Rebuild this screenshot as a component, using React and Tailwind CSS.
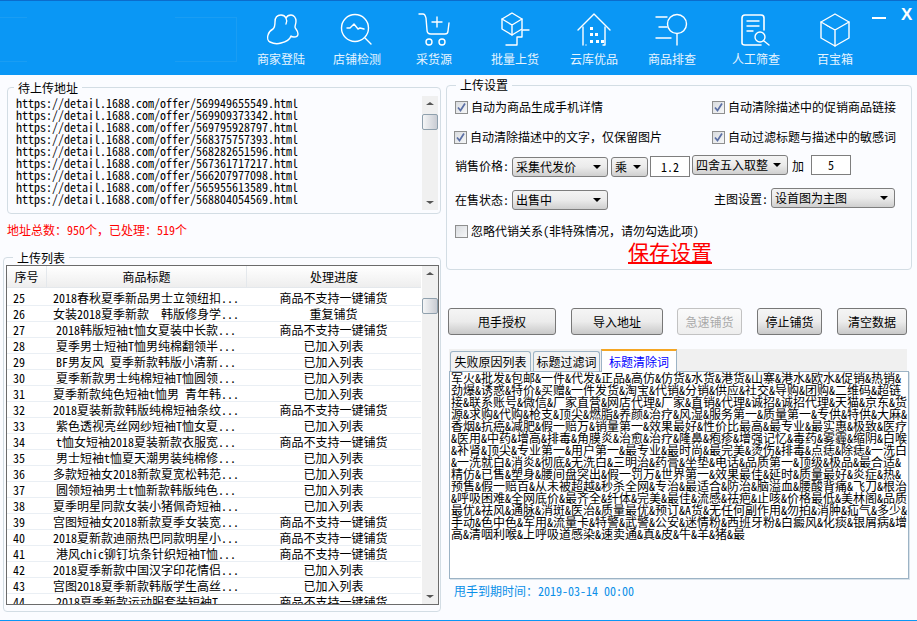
const rows = [
  [25, "2018春秋夏季新品男士立领纽扣...", 0],
  [26, "女装2018夏季新款  韩版修身学...", 2],
  [27, "2018韩版短袖t恤女夏装中长款...", 0],
  [28, "夏季男士短袖T恤男纯棉翻领半...", 1],
  [29, "BF男友风 夏季新款韩版小清新...", 1],
  [30, "夏季新款男士纯棉短袖T恤圆领...", 1],
  [31, "夏季新款纯色短袖t恤男 青年韩...", 1],
  [32, "2018夏装新款韩版纯棉短袖条纹...", 0],
  [33, "紫色透视亮丝网纱短袖T恤女夏...", 1],
  [34, "t恤女短袖2018夏装新款衣服宽...", 0],
  [35, "男士短袖t恤夏天潮男装纯棉修...", 1],
  [36, "多款短袖女2018新款夏宽松韩范...", 1],
  [37, "圆领短袖男士t恤新款韩版纯色...", 1],
  [38, "夏季明星同款女装小猪佩奇短袖...", 1],
  [39, "宫图短袖女2018新款夏季女装宽...", 0],
  [40, "2018夏新款迪丽热巴同款明星小...", 0],
  [41, "港风chic铆钉坑条针织短袖T恤...", 0],
  [42, "2018夏季新款中国汉字印花情侣...", 1],
  [43, "宫图2018夏季新款韩版学生高丝...", 1],
  [44, "2018夏季新款运动服套装短袖T...", 0],
];
const statuses = ["商品不支持一键铺货", "已加入列表", "重复铺货"];
const urls = ["569949655549", "569909373342", "569795928797", "568375757393", "568282651596", "567361717217", "566207977098", "565955613589", "568804054569"];
const words = [
  "军火&批发&包邮&一件&代发&正品&高仿&仿货&水货&港货&山寨&港水&欧水&促销&热销&",
  "劲爆&诱惑&特价&买赠&一件发货&淘宝&代销&分销&供应&社交&导购&团购&二维码&超链",
  "接&联系账号&微信&厂家直营&网店代理&厂家&直销&代理&诚招&诚招代理&天猫&京东&货",
  "源&求购&代购&枪支&顶尖&燃脂&养颜&治疗&风湿&服务第一&质量第一&专供&特供&大麻&",
  "香烟&抗癌&减肥&假一赔万&销量第一&效果最好&性价比最高&最专业&最实惠&极致&医疗",
  "&医用&中药&增高&排毒&角膜炎&治愈&治疗&隆鼻&疱疹&增强记忆&毒药&雾霾&缩阴&白喉",
  "&补肾&顶尖&专业第一&用户第一&最专业&最时尚&最完美&烫伤&排毒&点痣&除痣&一洗白",
  "&一洗就白&消炎&彻底&无洗白&三明治&药膏&坐垫&电话&品质第一&顶级&极品&最合适&",
  "精仿&已售&塑身&腰间盘突出&假一罚万&世界第一&效果最佳&延时&质量最好&炎症&热&",
  "预售&假一赔百&从未被超越&秒杀全网&专治&最适合&防治&脑溢血&腰酸背痛&飞刀&根治",
  "&呼吸困难&全网底价&最齐全&纤体&完美&最佳&流感&祛疤&止咳&价格最低&美林阁&品质",
  "最优&祛风&通脉&消斑&医治&质量最优&预订&A货&无任何副作用&勿拍&消肿&疝气&多少&",
  "手动&色中色&军用&流量卡&特警&武警&公安&迷情粉&西班牙粉&白癜风&化痰&银屑病&增",
  "高&清咽利喉&上呼吸道感染&速卖通&真&皮&牛&羊&猪&最",
].join("\n");

const Svg = ({ children }) => (
  <svg width="40" height="36" viewBox="0 0 40 36" fill="none" stroke="white" strokeWidth="1.4" strokeLinecap="round" strokeLinejoin="round">
    {children}
  </svg>
);
const icons = [
  <Svg key="a"><path d="M14 10c0-5 3-7 6-7 2 0 4 1 5 3 1-2 3-3 5-3 3 0 5 3 5 6 0 3-1 4-1 6 0 2 3 3 3 7 0 2-2 3-4 3-1 0-2 0-3-1-1 3-5 6-10 7-3 1-7 1-11-1-2-1-3-4-2-7 1-4 3-5 5-6 2-2 2-4 2-7z" /><path d="M25 6c1 2 1 4 0 6" /></Svg>,
  <Svg key="b"><circle cx="18" cy="16" r="13.5" /><path d="M28 26l6 6" /><path d="M10 16l3 0 4-4 4 5 2-1 4 1" /></Svg>,
  <Svg key="c"><path d="M5 2h4c2 0 2 1 3 4l1 12c0 3 2 4 4 4h14c2 0 3-1 3-3l1-8" /><path d="M23 5v10M18 10h10" /><circle cx="15" cy="30" r="3" /><circle cx="28" cy="30" r="3" /></Svg>,
  <Svg key="d"><path d="M17 1l10 6v10l-10 6-10-6V7z" /><path d="M7 7l10 6 10-6M17 13v10" /><path d="M11 33h11v-8h5v-7h7" /></Svg>,
  <Svg key="e"><path d="M4 18L20 2l16 16" /><path d="M9 15v18h0M31 15v18h-2" /><path d="M12 33h0" /><g fill="white" stroke="none"><rect x="16" y="15" width="3" height="3" /><rect x="16" y="21" width="3" height="3" /><rect x="21" y="21" width="3" height="3" /><rect x="16" y="28" width="3" height="3" /><rect x="22" y="28" width="3" height="3" /><rect x="27" y="28" width="3" height="3" /></g></Svg>,
  <Svg key="f"><path d="M4 5h11M7 15h8M4 26h15" /><circle cx="25" cy="12" r="9.5" /><path d="M25 22v11" /></Svg>,
  <Svg key="g"><path d="M28 18V6c0-2-1-3-3-3H9C7 3 6 4 6 6v25c0 1 1 2 3 2h16" strokeWidth="1.6" /><path d="M11 9h12M11 14h12M11 19h6" /><circle cx="24" cy="25" r="5" /><path d="M28 29l5 4" /></Svg>,
  <Svg key="h"><path d="M20 2l14 8v16l-14 8-14-8V10z" /><path d="M6 10l14 8 14-8M20 18v16" /><path d="M11 13l5 3" strokeWidth="1" /></Svg>,
];
const nav = ["商家登陆", "店铺检测", "采货源", "批量上货", "云库优品", "商品排查", "人工筛查", "百宝箱"];
const navX = ["w-[78px]", "w-[74px]", "w-[80px]", "w-[82px]", "w-[76px]", "w-[80px]", "w-[88px]", "w-[70px]"];

function Check({ on }) {
  return (
    <span className="flex w-[13px] h-[13px] shrink-0 items-center justify-center border border-[#8e8f8f] bg-gradient-to-br from-[#d9dce0] to-[#f6f7f8]">
      {on && (
        <svg width="11" height="11" viewBox="0 0 11 11" fill="none" stroke="#5b6fa5" strokeWidth="1.7">
          <path d="M2 5.5l2.5 3L9 1.5" />
        </svg>
      )}
    </span>
  );
}
function Select({ label, cls }) {
  return (
    <div className={`flex h-[20px] items-center justify-between rounded-[3px] border border-[#7e7e7e] bg-gradient-to-b from-[#f4f4f4] via-[#ebebeb] to-[#cfcfcf] pl-[3px] pr-[6px] ${cls}`}>
      <span>{label}</span>
      <span className="h-0 w-0 border-x-[4px] border-t-[4px] border-x-transparent border-t-black" />
    </div>
  );
}
function Btn({ children, cls, disabled }) {
  return (
    <button className={`flex h-[27px] items-center justify-center rounded-[3px] border bg-gradient-to-b ${disabled ? "border-[#c2c2c2] from-[#fafafa] to-[#eeeeee] text-[#a9a9a9]" : "border-[#777] from-[#f5f5f5] via-[#ececec] to-[#c9c9c9] text-black"} ${cls}`}>
      {children}
    </button>
  );
}
function Scroll({ top, cls }) {
  return (
    <div className={`flex w-[16px] shrink-0 flex-col items-center bg-[#f0f0f0] ${cls}`}>
      <span className="mb-auto mt-[6px] h-0 w-0 border-x-[4px] border-b-[3px] border-x-transparent border-b-[#555]" />
      <span className="mb-[6px] h-0 w-0 border-x-[4px] border-t-[3px] border-x-transparent border-t-[#555]" />
      <span className={`absolute left-0 h-[16px] w-[16px] rounded-[2px] border border-[#8fa0ad] bg-gradient-to-r from-[#f5f6f7] to-[#c9ccd3] ${top}`} />
    </div>
  );
}

export default function App() {
  return (
    <div className="flex h-[621px] w-[917px] flex-col overflow-hidden border-b border-[#0a97f5] bg-[#fbfcff] font-['Noto_Sans_Mono_CJK_SC','Noto_Sans_CJK_SC',sans-serif] text-[12px] leading-[12px] text-black">
      <header className="flex h-[75px] shrink-0 border-t border-[#0b6ccc] bg-[#0a97f5]">
        <div className="mt-[16px] h-[45px] w-[27px] shrink-0 border-y border-[#1a9df3]" />
        <div className="ml-[148px] mr-[5px] mt-[16px] h-[45px] w-[62px] shrink-0 border border-l-0 border-[#1a9df3]" />
        {nav.map((n, i) => (
          <div key={n} className={`flex flex-col items-center pt-[11px] text-white ${navX[i]}`}>
            {icons[i]}
            <span className="mt-[5px] text-[#e6f4ff]">{n}</span>
          </div>
        ))}
        <div className="ml-[2px] flex items-start">
          <span className="mt-[16px] h-[2px] w-[14px] bg-white" />
          <span className="ml-[15px] mt-[4px] font-['Liberation_Sans',sans-serif] text-[17px] font-bold leading-[20px] text-white">X</span>
        </div>
      </header>

      <main className="flex flex-1">
        <section className="w-[445px] shrink-0">
          <fieldset className="ml-[7px] mt-[4px] h-[135px] w-[434px] rounded-[4px] border border-[#d3dde4]">
            <legend className="ml-[6px] px-[4px] leading-[17px]">待上传地址</legend>
            <div className="relative flex h-[115px] pl-[8px]">
              <div className="flex-1 pt-[1px]">
                {urls.map((u) => (
                  <div key={u} className="h-[12px]">{`https://detail.1688.com/offer/${u}.html`}</div>
                ))}
              </div>
              <div className="relative mr-[2px] flex">
                <Scroll top="top-[18px]" cls="h-[114px]" />
              </div>
            </div>
          </fieldset>
          <p className="ml-[7px] mt-[10px] text-[#ff0000]">地址总数{"\uFF1A"}950个{"\uFF0C"}已处理{"\uFF1A"}519个</p>
          <fieldset className="ml-[3px] mt-[14px] h-[362px] w-[438px] rounded-[4px] border border-[#d3dde4]">
            <legend className="ml-[9px] px-[4px] leading-[15px]">上传列表</legend>
            <div className="relative ml-[2px] flex h-[340px] w-[433px] overflow-hidden border border-[#6b6b6b] bg-white">
              <div className="w-[414px]">
                <div className="flex h-[22px] items-center border-b border-[#e4e8ec] bg-gradient-to-b from-white to-[#eeeeee] text-center">
                  <span className="w-[40px] border-r border-[#e4e8ec] leading-[21px]">序号</span>
                  <span className="w-[200px] border-r border-[#e4e8ec] leading-[21px]">商品标题</span>
                  <span className="flex-1 leading-[21px]">处理进度</span>
                </div>
                <div className="pt-[2px]">
                  {rows.map(([n, t, s]) => (
                    <div key={n} className="flex h-[16px] items-center border-b border-[#eaeff4]">
                      <span className="w-[40px] pl-[6px]">{n}</span>
                      <span className="w-[198px] whitespace-pre text-center">{t}</span>
                      <span className="ml-[1px] w-[175px] text-center">{statuses[s]}</span>
                    </div>
                  ))}
                </div>
              </div>
              <div className="relative ml-[1px] flex">
                <Scroll top="top-[32px]" cls="h-[338px]" />
              </div>
            </div>
          </fieldset>
        </section>

        <section className="flex-1">
          <fieldset className="ml-[1px] mt-[2px] h-[193px] w-[466px] rounded-[4px] border border-[#d3dde4] pl-[8px]">
            <legend className="ml-[1px] px-[4px] leading-[16px]">上传设置</legend>
            <div className="mt-[7px] flex h-[14px] items-center">
              <label className="flex w-[257px] items-center gap-[3px]"><Check on />自动为商品生成手机详情</label>
              <label className="flex items-center gap-[3px]"><Check on />自动清除描述中的促销商品链接</label>
            </div>
            <div className="mt-[16px] flex h-[14px] items-center">
              <label className="ml-[-1px] flex w-[258px] items-center gap-[3px]"><Check on /><span>自动清除描述中的文字{"\uFF0C"}仅保留图片</span></label>
              <label className="flex items-center gap-[3px]"><Check on />自动过滤标题与描述中的敏感词</label>
            </div>
            <div className="mt-[11px] flex h-[22px] items-start">
              <span className="mt-[5px] w-[57px]">销售价格:</span>
              <Select label="采集代发价" cls="mt-[2px] w-[96px]" />
              <Select label="乘" cls="ml-[3px] mt-[2px] w-[37px]" />
              <span className="ml-[2px] mt-[1px] flex h-[21px] w-[40px] items-center justify-center border border-[#7e7e7e] bg-white">1.2</span>
              <Select label="四舍五入取整" cls="ml-[2px] w-[96px]" />
              <span className="ml-[4px] mt-[5px]">加</span>
              <span className="ml-[7px] flex h-[20px] w-[40px] items-center justify-center border border-[#7e7e7e] bg-white">5</span>
            </div>
            <div className="mt-[11px] flex h-[22px] items-start">
              <span className="mt-[6px] w-[57px]">在售状态:</span>
              <Select label="出售中" cls="mt-[2px] w-[96px]" />
              <span className="ml-[106px] mt-[5px] w-[57px]">主图设置:</span>
              <Select label="设首图为主图" cls="w-[124px]" />
            </div>
            <label className="mt-[14px] flex h-[14px] items-center gap-[3px]"><Check /><span>忽略代销关系(非特殊情况{"\uFF0C"}请勿勾选此项)</span></label>
            <div className="ml-[173px] mt-[1px] h-[24px] text-[21px] leading-[24px] text-[#ff0000] underline">保存设置</div>
          </fieldset>

          <div className="ml-[3px] mt-[38px] flex">
            <Btn cls="w-[108px]">甩手授权</Btn>
            <Btn cls="ml-[15px] w-[92px]">导入地址</Btn>
            <Btn cls="ml-[14px] w-[65px]" disabled>急速铺货</Btn>
            <Btn cls="ml-[15px] w-[65px]">停止铺货</Btn>
            <Btn cls="ml-[15px] w-[70px]">清空数据</Btn>
          </div>

          <div className="ml-[4px] mt-[14px] flex h-[22px] w-[458px] items-end gap-[2px] bg-[#f0f0f0] pl-[1px]">
            <span className="flex h-[20px] w-[81px] items-center justify-center rounded-t-[3px] border border-b-0 border-[#9cb3c5] bg-[#f3f3f3]">失败原因列表</span>
            <span className="flex h-[20px] w-[67px] items-center justify-center rounded-t-[3px] border border-b-0 border-[#9cb3c5] bg-[#f3f3f3]">标题过滤词</span>
            <span className="z-10 mb-[-1px] ml-[-1px] flex h-[23px] w-[76px] items-center justify-center border-x border-t-2 border-[#9cb3c5] border-t-[#f5a623] bg-white text-[#0000ff]">标题清除词</span>
          </div>
          <div className="ml-[4px] h-[208px] w-[460px] whitespace-pre border border-[#9cb3c5] bg-white pl-[1px] shadow-[1px_1px_0_#d8e2ea]">{words}</div>
          <p className="ml-[9px] mt-[6px] text-[#0a8fe8]">甩手到期时间{"\uFF1A"}2019-03-14 00:00</p>
        </section>
      </main>
    </div>
  );
}
